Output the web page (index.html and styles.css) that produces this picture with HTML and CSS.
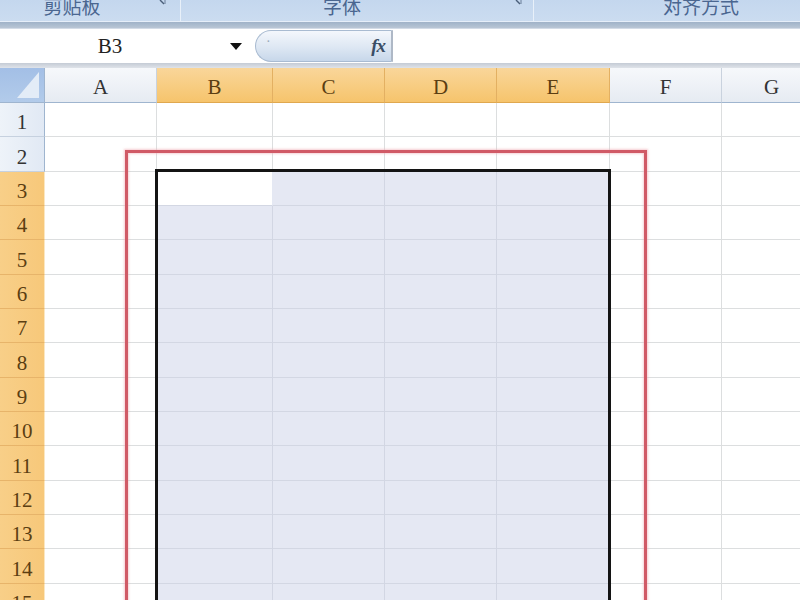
FILE: index.html
```html
<!DOCTYPE html>
<html>
<head>
<meta charset="utf-8">
<link rel="stylesheet" href="styles.css">
</head>
<body>
<div class="app">
  <div class="ribbon">
    <div class="group g1"><span class="glabel">剪贴板</span><span class="launch"><svg width="10" height="10" viewBox="0 0 10 10"><path d="M2 1h6v6" fill="none" stroke="#6a7f99" stroke-width="1"/><path d="M3 3l4 4" stroke="#4a5f7a" stroke-width="1.4"/></svg></span></div>
    <div class="group g2"><span class="glabel">字体</span><span class="launch"><svg width="10" height="10" viewBox="0 0 10 10"><path d="M2 1h6v6" fill="none" stroke="#6a7f99" stroke-width="1"/><path d="M3 3l4 4" stroke="#4a5f7a" stroke-width="1.4"/></svg></span></div>
    <div class="group g3"><span class="glabel">对齐方式</span></div>
  </div>
  <div class="ribbon-edge"></div>
  <div class="formula-bar">
    <div class="namebox"><span class="name">B3</span><span class="arrow"></span></div>
    <div class="fxbtn"><span class="dots">·</span><span class="fx">fx</span></div>
    <div class="finput"></div>
  </div>
  <div class="bar-gap"></div>
  <div class="sheet-wrap">
    <div class="sheet">
      <div class="corner"><span class="tri"></span></div>
      <div class="ch">A</div><div class="ch sel">B</div><div class="ch sel">C</div><div class="ch sel">D</div><div class="ch sel">E</div><div class="ch">F</div><div class="ch">G</div>

      <div class="rh">1</div><div class="c"></div><div class="c"></div><div class="c"></div><div class="c"></div><div class="c"></div><div class="c"></div><div class="c"></div>
      <div class="rh">2</div><div class="c"></div><div class="c"></div><div class="c"></div><div class="c"></div><div class="c"></div><div class="c"></div><div class="c"></div>
      <div class="rh sel">3</div><div class="c"></div><div class="c act"></div><div class="c s"></div><div class="c s"></div><div class="c s"></div><div class="c"></div><div class="c"></div>
      <div class="rh sel">4</div><div class="c"></div><div class="c s"></div><div class="c s"></div><div class="c s"></div><div class="c s"></div><div class="c"></div><div class="c"></div>
      <div class="rh sel">5</div><div class="c"></div><div class="c s"></div><div class="c s"></div><div class="c s"></div><div class="c s"></div><div class="c"></div><div class="c"></div>
      <div class="rh sel">6</div><div class="c"></div><div class="c s"></div><div class="c s"></div><div class="c s"></div><div class="c s"></div><div class="c"></div><div class="c"></div>
      <div class="rh sel">7</div><div class="c"></div><div class="c s"></div><div class="c s"></div><div class="c s"></div><div class="c s"></div><div class="c"></div><div class="c"></div>
      <div class="rh sel">8</div><div class="c"></div><div class="c s"></div><div class="c s"></div><div class="c s"></div><div class="c s"></div><div class="c"></div><div class="c"></div>
      <div class="rh sel">9</div><div class="c"></div><div class="c s"></div><div class="c s"></div><div class="c s"></div><div class="c s"></div><div class="c"></div><div class="c"></div>
      <div class="rh sel">10</div><div class="c"></div><div class="c s"></div><div class="c s"></div><div class="c s"></div><div class="c s"></div><div class="c"></div><div class="c"></div>
      <div class="rh sel">11</div><div class="c"></div><div class="c s"></div><div class="c s"></div><div class="c s"></div><div class="c s"></div><div class="c"></div><div class="c"></div>
      <div class="rh sel">12</div><div class="c"></div><div class="c s"></div><div class="c s"></div><div class="c s"></div><div class="c s"></div><div class="c"></div><div class="c"></div>
      <div class="rh sel">13</div><div class="c"></div><div class="c s"></div><div class="c s"></div><div class="c s"></div><div class="c s"></div><div class="c"></div><div class="c"></div>
      <div class="rh sel">14</div><div class="c"></div><div class="c s"></div><div class="c s"></div><div class="c s"></div><div class="c s"></div><div class="c"></div><div class="c"></div>
      <div class="rh sel">15</div><div class="c"></div><div class="c s"></div><div class="c s"></div><div class="c s"></div><div class="c s"></div><div class="c"></div><div class="c"></div>
    </div>
    <div class="selbox"></div>
    <div class="redbox"></div>
  </div>
</div>
</body>
</html>
```
FILE: styles.css
```css
* { box-sizing: border-box; }
html, body { margin: 0; padding: 0; }
body { width: 800px; height: 600px; overflow: hidden; background: #fff; font-family: "Liberation Serif", "Noto Sans CJK SC", serif; }
.app { width: 800px; height: 600px; overflow: hidden; display: flex; flex-direction: column; }

.ribbon { height: 22px; display: flex; background: linear-gradient(#c4d7ee, #cbdcf0); overflow: hidden; border-bottom: 1px solid #e6eef8; flex: none; }
.group { display: flex; align-items: flex-start; height: 22px; border-right: 1px solid #e8f0f9; }
.g1 { width: 181px; }
.g2 { width: 353px; }
.g3 { flex: 1; border-right: none; padding-left: 92px; }
.glabel { text-align: center; font-family: "Noto Sans CJK SC", sans-serif; font-size: 19px; line-height: 22px; color: #4a6690; margin-top: -5px; }
.g1 .glabel { width: 144px; }
.g2 .glabel { width: 322px; }
.g3 .glabel { width: 150px; }
.launch { flex: 1; display: flex; justify-content: center; margin-top: -3px; }

.ribbon-edge { height: 6px; flex: none; background: linear-gradient(#9fb2c8, #b9c6d5); }

.formula-bar { height: 35px; flex: none; display: flex; background: #fff; border-top: 1px solid #d3dbe6; }
.namebox { width: 252px; display: flex; align-items: center; }
.name { width: 220px; text-align: center; font-size: 21px; color: #222; }
.arrow { width: 0; height: 0; border-left: 6px solid transparent; border-right: 6px solid transparent; border-top: 7px solid #111; margin-left: 10px; }
.fxbtn { width: 138px; margin: 1px 0 1px 3px; border: 1px solid #a9bbd1; border-right: 2px solid #aeb8c6; border-radius: 17px 0 0 17px; background: linear-gradient(#f4f7fc, #dde7f3 55%, #c7d7ea); display: flex; align-items: center; justify-content: space-between; padding: 0 6px 0 10px; }
.dots { color: #9aa9bb; font-size: 14px; margin-top: -8px; }
.fx { font-style: italic; font-weight: bold; font-size: 19px; color: #3b4e66; letter-spacing: -1px; }
.finput { flex: 1; background: #fff; }

.bar-gap { height: 5px; flex: none; background: linear-gradient(#c4cbd5, #dfe3e9); }

.sheet-wrap { position: relative; flex: 1; overflow: hidden; }
.sheet { display: grid; grid-template-columns: 45px 112px 116px 112px 112px 113px 112px 100px; grid-template-rows: 35px; grid-auto-rows: 34.35px; }

.corner { background: linear-gradient(#a3bfe6, #b2cbea); border-right: 1px solid #9fb5cf; border-bottom: 1px solid #9fb5cf; position: relative; }
.tri { position: absolute; right: 5px; bottom: 4px; width: 0; height: 0; border-left: 22px solid transparent; border-bottom: 26px solid #e3ecf7; }

.ch { display: flex; align-items: center; justify-content: center; padding-top: 4px; font-size: 21px; color: #333; background: linear-gradient(#f6f8fb, #e6ebf2); border-right: 1px solid #c9d2de; border-bottom: 1px solid #9fb5cf; }
.ch.sel { background: linear-gradient(#f9d69a, #f6c46c); color: #5b3e12; border-right: 1px solid #e3b062; border-bottom: 1px solid #e0a84f; }

.rh { display: flex; align-items: center; justify-content: center; padding-top: 6px; font-size: 21px; color: #333; background: linear-gradient(90deg, #eef3f9, #e1e9f4); border-right: 1px solid #9fb5cf; border-bottom: 1px solid #c6d1df; }
.rh.sel { background: linear-gradient(90deg, #f8cf88, #f7c87a); color: #5b3e12; border-right: 1px solid #fbe7c2; border-bottom: 1px solid #e7b46a; }

.c { background: #fff; border-right: 1px solid #dcdedf; border-bottom: 1px solid #dcdedf; }
.c.s { background: #e5e8f3; border-right: 1px solid #d2d6e3; border-bottom: 1px solid #d3d7e3; }
.c.act { background: #fff; border-right: 1px solid #e4e8f3; border-bottom: 1px solid #d3d7e3; }

.selbox { position: absolute; left: 155px; top: 101px; width: 456px; height: 480px; border: 3px solid #141414; }
.redbox { position: absolute; left: 125px; top: 82px; width: 522px; height: 500px; border: 3px solid #d05a66; box-shadow: 0 0 2px 1px rgba(240, 170, 178, 0.6), inset 0 0 2px 1px rgba(240, 170, 178, 0.5); }
```
